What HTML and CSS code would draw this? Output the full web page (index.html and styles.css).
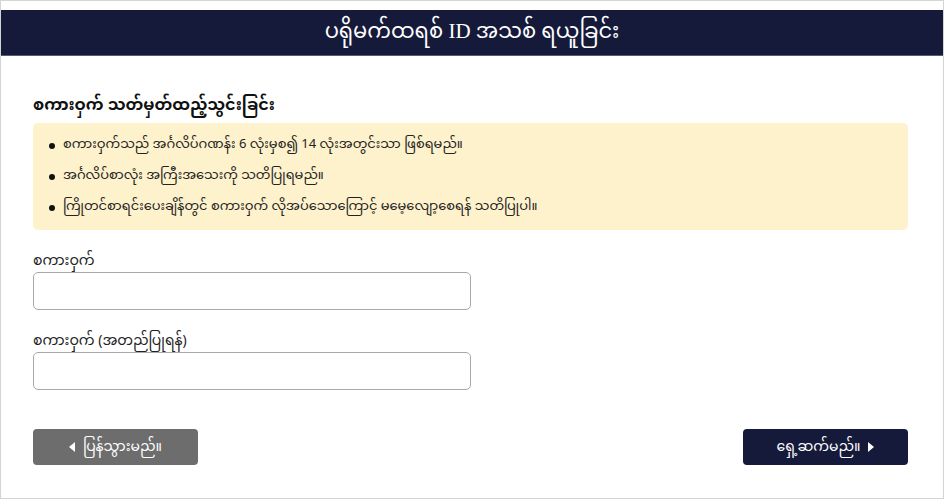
FILE: index.html
```html
<!DOCTYPE html>
<html lang="my">
<head>
    <meta charset="UTF-8">
    <meta name="viewport" content="width=device-width, initial-scale=1.0">
    <title>ပရိုမက်ထရစ် ID အသစ် ရယူခြင်း</title>
    <link rel="stylesheet" href="styles.css">
</head>
<body>
    <div class="page">
        <!-- Header -->
        <div class="page-header">
            <h1>ပရိုမက်ထရစ် ID အသစ် ရယူခြင်း</h1>
        </div>

        <div class="content">
            <h2 class="section-title">စကားဝှက် သတ်မှတ်ထည့်သွင်းခြင်း</h2>

            <!-- Password rules -->
            <ul class="notice">
                <li>စကားဝှက်သည် အင်္ဂလိပ်ဂဏန်း 6 လုံးမှစ၍ 14 လုံးအတွင်းသာ ဖြစ်ရမည်။</li>
                <li>အင်္ဂလိပ်စာလုံး အကြီးအသေးကို သတိပြုရမည်။</li>
                <li>ကြိုတင်စာရင်းပေးချိန်တွင် စကားဝှက် လိုအပ်သောကြောင့် မမေ့လျော့စေရန် သတိပြုပါ။</li>
            </ul>

            <!-- Password form -->
            <div class="field">
                <label for="password" class="field-label">စကားဝှက်</label>
                <input type="password" id="password" class="field-input">
            </div>
            <div class="field">
                <label for="password-confirm" class="field-label">စကားဝှက် (အတည်ပြုရန်)</label>
                <input type="password" id="password-confirm" class="field-input">
            </div>

            <div class="actions">
                <button class="btn btn-back"><span class="arrow arrow-left"></span>ပြန်သွားမည်။</button>
                <button class="btn btn-next">ရှေ့ဆက်မည်။<span class="arrow arrow-right"></span></button>
            </div>
        </div>
    </div>
</body>
</html>
```

FILE: styles.css
```css
html, body {
    margin: 0;
    padding: 0;
}
body {
    font-family: "Noto Sans Myanmar", "Myanmar Text", "Padauk", "Noto Sans", "DejaVu Sans", sans-serif;
    color: #222;
    background-color: #fff;
}
.page {
    box-sizing: border-box;
    width: 944px;
    height: 499px;
    border: 1px solid #d4d4d4;
    padding-top: 9px;
}
.page-header {
    background-color: #161a3a;
    border-bottom: 1px solid #555a78;
    height: 45px;
    display: flex;
    align-items: center;
    justify-content: center;
}
.page-header h1 {
    margin: 0;
    color: #fff;
    font-family: "Liberation Serif", "Noto Sans Myanmar", serif;
    font-size: 21px;
    font-weight: normal;
}
.content {
    padding: 0 35px 0 32px;
}
.section-title {
    margin: 40px 0 5px;
    font-size: 16px;
    font-weight: bold;
    color: #111;
    line-height: 22px;
}
.notice {
    list-style: none;
    margin: 0;
    padding: 7px 16px;
    background-color: #fef2cc;
    border-radius: 5px;
}
.notice li {
    position: relative;
    padding-left: 14px;
    font-size: 13px;
    line-height: 31px;
}
.notice li::before {
    content: "";
    position: absolute;
    left: 0;
    top: 13px;
    width: 6px;
    height: 6px;
    border-radius: 50%;
    background-color: #111;
}
.field {
    margin-top: 21px;
}
.field-label {
    display: block;
    font-size: 14px;
    line-height: 21px;
    margin-bottom: 0;
}
.field-input {
    box-sizing: border-box;
    width: 438px;
    height: 38px;
    border: 1px solid #aaa;
    border-radius: 5px;
    outline: none;
    font-size: 14px;
    padding: 0 10px;
}
.actions {
    display: flex;
    justify-content: space-between;
    margin-top: 39px;
}
.btn {
    width: 165px;
    height: 36px;
    border: none;
    border-radius: 4px;
    color: #fff;
    font-family: inherit;
    font-size: 14px;
    display: flex;
    align-items: center;
    justify-content: center;
    gap: 8px;
    cursor: pointer;
}
.btn-back {
    background-color: #6d6d6d;
}
.btn-next {
    background-color: #161a3a;
}
.arrow {
    width: 0;
    height: 0;
    border-top: 5px solid transparent;
    border-bottom: 5px solid transparent;
}
.arrow-left {
    border-right: 6px solid #fff;
}
.arrow-right {
    border-left: 6px solid #fff;
}
```
